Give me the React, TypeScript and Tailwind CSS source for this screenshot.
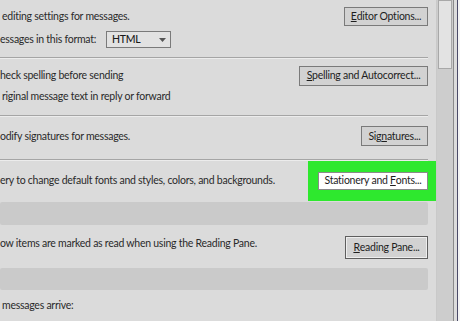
import type { ReactNode } from 'react';

function DlgButton({
  children,
  width,
  className = '',
}: {
  children: ReactNode;
  width: string;
  className?: string;
}) {
  return (
    <div
      className={`flex h-[19px] shrink-0 items-center justify-center whitespace-nowrap border border-[#7a7a7a] bg-[#d2d2d2] text-[#1e1e1e] ${width} ${className}`}
    >
      {children}
    </div>
  );
}

function Divider() {
  return <div className="mr-[8px] h-px bg-[#a5a5a5] shadow-[0_1px_0_#ececec]" />;
}

export default function App() {
  return (
    <div
      className="flex h-[321px] w-[460px] overflow-hidden whitespace-nowrap bg-[#dbdbdb] text-[10.5px] tracking-[-0.25px] text-[#2a2a2a]"
      style={{ fontFamily: 'Lato, "Open Sans", sans-serif' }}
    >
      {/* Options content */}
      <div className="flex w-[436px] flex-col">
        {/* Compose */}
        <div className="h-[58px] pr-[8px] pt-[7px]">
          <div className="flex h-[19px] items-center justify-between">
            <span className="pl-[2px]">editing settings for messages.</span>
            <DlgButton width="w-[84px]">
              <span className="underline">E</span>ditor Options...
            </DlgButton>
          </div>
          <div className="mt-[5px] flex h-[17px] items-center">
            <span className="w-[106px]">essages in this format:</span>
            <div className="flex h-[17px] w-[65px] items-center justify-between border border-[#7a7a7a] bg-[#e2e2e2] pl-[5px] pr-[4px]">
              <span className="font-medium text-[#1a1a1a]">HTML</span>
              <svg width="7" height="4" viewBox="0 0 7 4">
                <path d="M0 0h7L3.5 4z" fill="#555" />
              </svg>
            </div>
          </div>
        </div>
        <Divider />

        {/* Spelling */}
        <div className="h-[58px] pr-[8px] pt-[8px]">
          <div className="flex h-[20px] items-center justify-between">
            <span>heck spelling before sending</span>
            <DlgButton width="w-[129px]" className="h-[20px]">
              <span className="underline">S</span>pelling and Autocorrect...
            </DlgButton>
          </div>
          <div className="mt-[2px] flex h-[18px] items-center pl-[2px]">
            riginal message text in reply or forward
          </div>
        </div>
        <Divider />

        {/* Signatures */}
        <div className="h-[44px] pr-[8px] pt-[11px]">
          <div className="flex h-[20px] items-center justify-between">
            <span>odify signatures for messages.</span>
            <DlgButton width="w-[67px]" className="h-[20px]">
              Sig<span className="underline">n</span>atures...
            </DlgButton>
          </div>
        </div>
        <Divider />

        {/* Stationery */}
        <div className="flex h-[43px] items-center justify-between pt-[1px]">
          <span>ery to change default fonts and styles, colors, and backgrounds.</span>
          <div className="flex h-[40px] w-[128px] shrink-0 items-center bg-[#2ee82e] pl-[10px] pr-[8px]">
            <div className="flex h-[18px] w-[110px] items-center justify-center border border-[#8a8a8a] bg-white text-[#1e1e1e]">
              Stationery and&nbsp;<span className="underline">F</span>onts...
            </div>
          </div>
        </div>

        {/* Blurred section header */}
        <div className="mr-[8px] h-[24px] rounded-[2px] bg-[#cacaca] blur-[0.5px]" />

        {/* Reading pane */}
        <div className="h-[44px] pr-[8px] pt-[11px]">
          <div className="flex items-start justify-between">
            <span className="mt-0">ow items are marked as read when using the Reading Pane.</span>
            <div className="shrink-0 border border-[#5e5e5e] bg-[#eeeeee] p-px">
              <DlgButton width="w-[79px]" className="h-[18px] border-transparent bg-[#d0d0d0]">
                <span className="underline">R</span>eading Pane...
              </DlgButton>
            </div>
          </div>
        </div>

        <div className="mr-[8px] h-[22px] rounded-[2px] bg-[#cacaca] blur-[0.5px]" />

        <div className="flex h-[32px] items-center pl-[2px] pt-[2px]">messages arrive:</div>
      </div>

      {/* Scrollbar */}
      <div className="w-px bg-[#c9c9c9]" />
      <div className="flex w-[16px] flex-col bg-[#cdcdcd] px-px">
        <div className="h-[69px] border border-[#a8a8a8] bg-[#e3e3e3]" />
      </div>
      <div className="w-px bg-[#8a8a8a]" />
      <div className="w-[3px] bg-[#dcdcdc]" />
      <div className="w-px bg-[#4b4b68]" />
      <div className="flex-1 bg-[#f4f4f4]" />
    </div>
  );
}
